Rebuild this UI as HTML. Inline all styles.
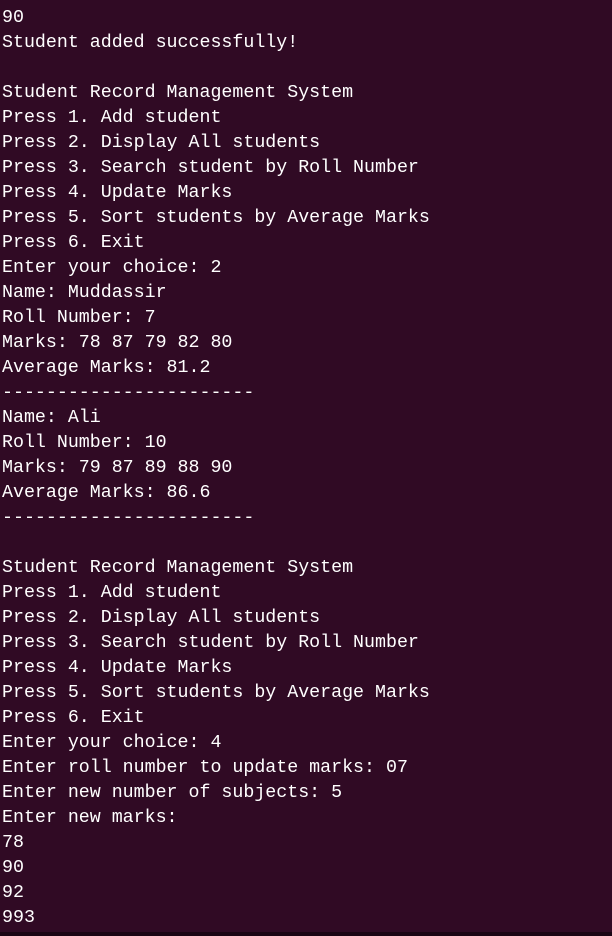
<!DOCTYPE html>
<html><head><meta charset="utf-8"><style>
html,body{margin:0;padding:0;}
body{width:612px;height:936px;background:#300a24;overflow:hidden;position:relative;}
pre{margin:0;padding:6px 0 0 2px;font-family:"Liberation Mono","DejaVu Sans Mono",monospace;font-size:18.3px;line-height:25px;color:#ffffff;}
.bar{position:absolute;left:0;right:0;bottom:0;height:4px;background:#1a0514;}
</style></head><body><pre>90
Student added successfully!

Student Record Management System
Press 1. Add student
Press 2. Display All students
Press 3. Search student by Roll Number
Press 4. Update Marks
Press 5. Sort students by Average Marks
Press 6. Exit
Enter your choice: 2
Name: Muddassir
Roll Number: 7
Marks: 78 87 79 82 80
Average Marks: 81.2
-----------------------
Name: Ali
Roll Number: 10
Marks: 79 87 89 88 90
Average Marks: 86.6
-----------------------

Student Record Management System
Press 1. Add student
Press 2. Display All students
Press 3. Search student by Roll Number
Press 4. Update Marks
Press 5. Sort students by Average Marks
Press 6. Exit
Enter your choice: 4
Enter roll number to update marks: 07
Enter new number of subjects: 5
Enter new marks:
78
90
92
993</pre><div class="bar"></div></body></html>
